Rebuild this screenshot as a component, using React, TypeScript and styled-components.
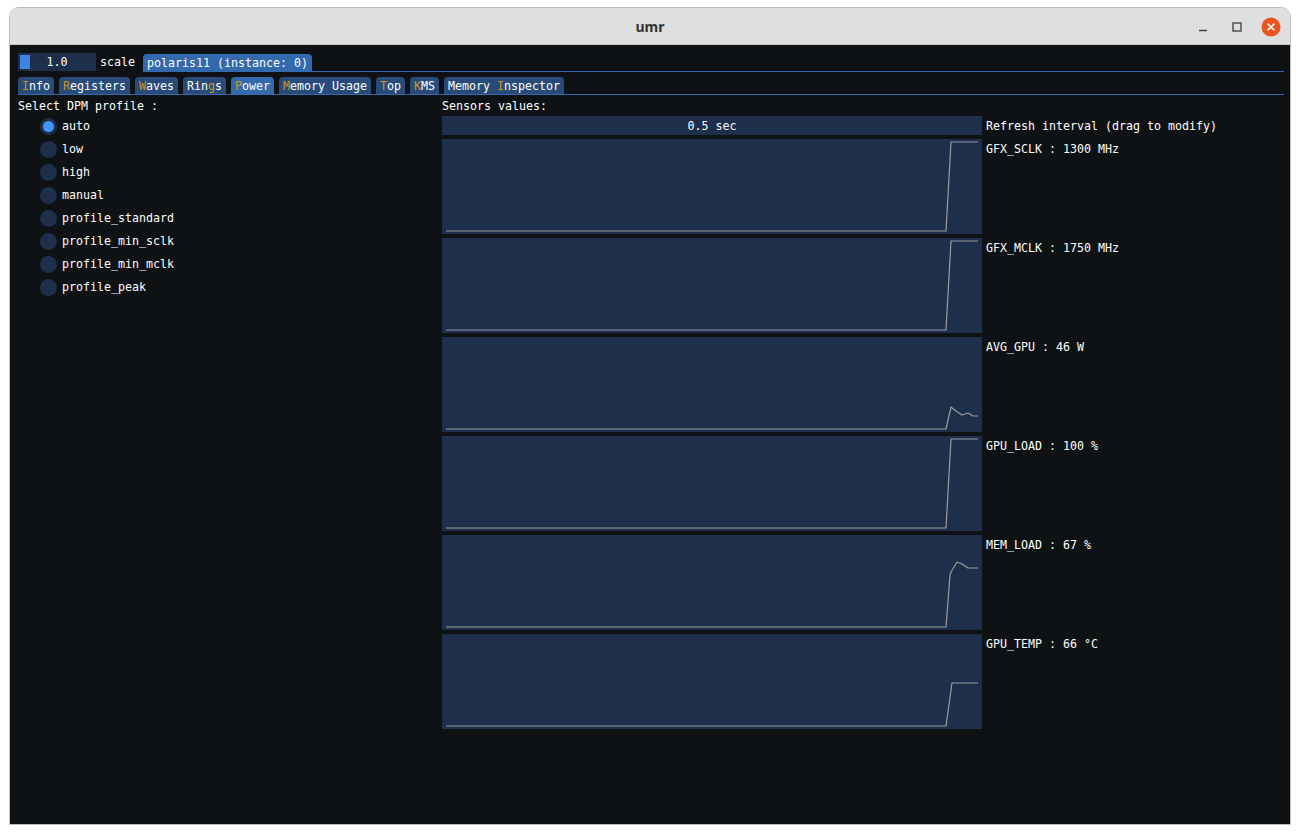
import * as React from 'react';
import styled, { createGlobalStyle } from 'styled-components';

const GlobalStyle = createGlobalStyle`
    html, body {
        margin: 0;
        padding: 0;
        background: #ffffff;
    }
    #root {
        width: 1300px;
        height: 834px;
    }
`;

const Window = styled.div`
    margin: 7px 0 0 9px;
    width: 1282px;
    height: 818px;
    box-sizing: border-box;
    border: 1px solid #bcbcbc;
    border-radius: 10px 10px 0 0;
    display: flex;
    flex-direction: column;
    overflow: hidden;
`;

const TitleBar = styled.div`
    height: 36px;
    flex: none;
    background: #dfdfdf;
    border-bottom: 1px solid #c9c9c9;
    display: grid;
    grid-template-columns: 1fr auto 1fr;
    align-items: center;
`;

const Title = styled.span`
    grid-column: 2;
    font-family: "Noto Sans", "DejaVu Sans", sans-serif;
    font-weight: 700;
    font-size: 14px;
    color: #333333;
`;

const Controls = styled.div`
    grid-column: 3;
    justify-self: end;
    display: flex;
    gap: 10px;
    padding-right: 7px;
    padding-top: 1px;
`;

const CtrlButton = styled.div`
    width: 24px;
    height: 24px;
    display: flex;
    align-items: center;
    justify-content: center;
`;

const Content = styled.div`
    flex: 1;
    background: #0e1214;
    padding: 8px;
    font-family: "DejaVu Sans Mono", "Liberation Mono", monospace;
    font-size: 11.63px;
    line-height: 13px;
    color: #ffffff;
`;

const TopRow = styled.div`
    display: flex;
    height: 19px;
`;

const Slider = styled.div`
    width: 78px;
    height: 18px;
    box-sizing: border-box;
    padding: 2px;
    background: #1d2f4a;
    display: grid;
    grid-template-areas: "cell";
`;

const Grab = styled.div`
    grid-area: cell;
    width: 10px;
    background: #3d85e0;
`;

const SliderValue = styled.span`
    grid-area: cell;
    justify-self: center;
    align-self: center;
    padding-top: 1px;
`;

const Label = styled.span`
    margin-left: 4px;
    height: 18px;
    padding-top: 1px;
    box-sizing: border-box;
    display: flex;
    align-items: center;
`;

const TabBar = styled.div<{ $inset?: number }>`
    flex: 1;
    display: flex;
    align-items: flex-end;
    gap: 5px;
    margin-left: ${p => p.$inset ?? 0}px;
    border-bottom: 1px solid #3369ad;
    margin-right: -2px;
`;

const Tab = styled.div<{ $active?: boolean }>`
    height: 17px;
    padding: 1px 4px 0;
    box-sizing: border-box;
    display: flex;
    align-items: center;
    border-radius: 4px 4px 0 0;
    background: ${p => (p.$active ? '#3369ad' : '#284b79')};
    white-space: pre;
`;

const Hot = styled.span`
    color: #cf961f;
`;

const TabRow = styled.div`
    display: flex;
    margin-top: 5px;
`;

const Main = styled.div`
    display: grid;
    grid-template-columns: 424px 1fr;
    margin-top: 5px;
`;

const Column = styled.div`
    display: flex;
    flex-direction: column;
`;

const RadioList = styled.div`
    display: flex;
    flex-direction: column;
    gap: 6px;
    margin-top: 5px;
    padding-left: 22px;
`;

const RadioRow = styled.div`
    display: flex;
    align-items: center;
    gap: 5px;
    height: 17px;
`;

const Radio = styled.div<{ $checked?: boolean }>`
    width: 17px;
    height: 17px;
    border-radius: 50%;
    background: #1d2f4a;
    display: flex;
    align-items: center;
    justify-content: center;

    &::after {
        content: '';
        width: 11px;
        height: 11px;
        border-radius: 50%;
        background: ${p => (p.$checked ? '#4296fa' : 'transparent')};
    }
`;

const SensorGrid = styled.div`
    display: grid;
    grid-template-columns: 540px auto;
    column-gap: 4px;
    row-gap: 4px;
    margin-top: 3px;
`;

const Bar = styled.div`
    height: 19px;
    padding-top: 1px;
    box-sizing: border-box;
    background: #1d2f4a;
    display: flex;
    align-items: center;
    justify-content: center;
`;

const Plot = styled.div`
    height: 95px;
    background: #1d2f4a;
    display: flex;
`;

const SensorLabel = styled.div`
    padding-top: 4px;
    white-space: pre;
`;

const profiles = [
    'auto',
    'low',
    'high',
    'manual',
    'profile_standard',
    'profile_min_sclk',
    'profile_min_mclk',
    'profile_peak',
];

const step = [[4, 92], [504, 92], [509, 3], [536, 3]];

const sensors: { label: string; points: number[][] }[] = [
    { label: 'GFX_SCLK : 1300 MHz', points: step },
    { label: 'GFX_MCLK : 1750 MHz', points: step },
    {
        label: 'AVG_GPU : 46 W',
        points: [[4, 92], [504, 92], [509, 70], [514, 74], [520, 78], [526, 76], [531, 79], [536, 79]],
    },
    { label: 'GPU_LOAD : 100 %', points: step },
    {
        label: 'MEM_LOAD : 67 %',
        points: [[4, 92], [504, 92], [508, 40], [509, 37], [515, 27], [520, 29], [526, 33], [536, 33]],
    },
    {
        label: 'GPU_TEMP : 66 °C',
        points: [[4, 92], [504, 92], [510, 49], [536, 49]],
    },
];

const tabs: { pre?: string; hot: string; post: string; active?: boolean }[] = [
    { hot: 'I', post: 'nfo' },
    { hot: 'R', post: 'egisters' },
    { hot: 'W', post: 'aves' },
    { pre: 'Rin', hot: 'g', post: 's' },
    { hot: 'P', post: 'ower', active: true },
    { hot: 'M', post: 'emory Usage' },
    { hot: 'T', post: 'op' },
    { hot: 'K', post: 'MS' },
    { pre: 'Memory ', hot: 'I', post: 'nspector' },
];

function PlotLines({ points }: { points: number[][] }) {
    return (
        <svg width="540" height="95" viewBox="0 0 540 95">
            <polyline
                points={points.map(p => p.join(',')).join(' ')}
                fill="none"
                stroke="#9c9c9c"
                strokeWidth="1.2"
                strokeLinejoin="round"
            />
        </svg>
    );
}

export default function App() {
    return (
        <>
            <GlobalStyle />
            <Window>
                <TitleBar>
                    <Title>umr</Title>
                    <Controls>
                        <CtrlButton>
                            <svg width="10" height="10" viewBox="0 0 10 10">
                                <line x1="1" y1="8.5" x2="9" y2="8.5" stroke="#3c3c3c" strokeWidth="1.3" />
                            </svg>
                        </CtrlButton>
                        <CtrlButton>
                            <svg width="10" height="10" viewBox="0 0 10 10">
                                <rect x="1" y="1" width="8" height="8" fill="none" stroke="#3c3c3c" strokeWidth="1.3" />
                            </svg>
                        </CtrlButton>
                        <CtrlButton>
                            <svg width="20" height="20" viewBox="0 0 20 20">
                                <circle cx="10" cy="10" r="9.5" fill="#e95420" />
                                <path d="M6.6 6.6 L13.4 13.4 M13.4 6.6 L6.6 13.4" stroke="#ffffff" strokeWidth="1.5" />
                            </svg>
                        </CtrlButton>
                    </Controls>
                </TitleBar>
                <Content>
                    <TopRow>
                        <Slider>
                            <Grab />
                            <SliderValue>1.0</SliderValue>
                        </Slider>
                        <Label>scale</Label>
                        <TabBar $inset={8}>
                            <Tab $active>polaris11 (instance: 0)</Tab>
                        </TabBar>
                    </TopRow>
                    <TabRow>
                        <TabBar>
                            {tabs.map((t, i) => (
                                <Tab key={i} $active={t.active}>
                                    {t.pre}
                                    <Hot>{t.hot}</Hot>
                                    {t.post}
                                </Tab>
                            ))}
                        </TabBar>
                    </TabRow>
                    <Main>
                        <Column>
                            <span>Select DPM profile :</span>
                            <RadioList>
                                {profiles.map((p, i) => (
                                    <RadioRow key={p}>
                                        <Radio $checked={i === 0} />
                                        <span>{p}</span>
                                    </RadioRow>
                                ))}
                            </RadioList>
                        </Column>
                        <Column>
                            <span>Sensors values:</span>
                            <SensorGrid>
                                <Bar>0.5 sec</Bar>
                                <SensorLabel>Refresh interval (drag to modify)</SensorLabel>
                                {sensors.map(s => (
                                    <React.Fragment key={s.label}>
                                        <Plot>
                                            <PlotLines points={s.points} />
                                        </Plot>
                                        <SensorLabel>{s.label}</SensorLabel>
                                    </React.Fragment>
                                ))}
                            </SensorGrid>
                        </Column>
                    </Main>
                </Content>
            </Window>
        </>
    );
}
